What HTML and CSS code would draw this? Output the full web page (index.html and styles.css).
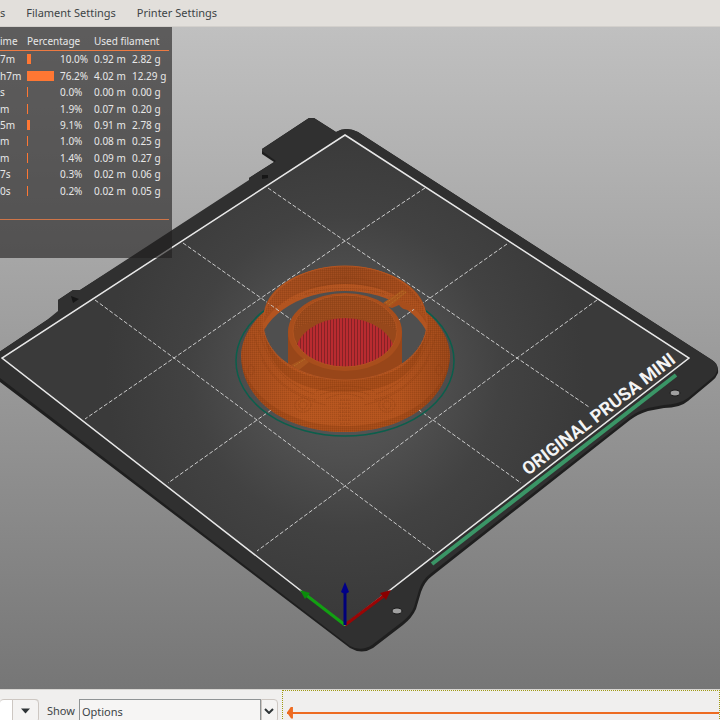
FILE: index.html
```html
<!DOCTYPE html>
<html lang="en">
<head>
    <meta charset="UTF-8">
    <meta name="viewport" content="width=device-width, initial-scale=1.0">
    <title>Preview</title>
    <link rel="stylesheet" href="styles.css">
</head>
<body>
    <!-- Settings tabs -->
    <nav class="tabs">
        <button type="button">s</button>
        <button type="button">Filament Settings</button>
        <button type="button">Printer Settings</button>
    </nav>

    <main class="viewport">
        <!-- 3D scene -->
        <svg class="scene" viewBox="0 27 720 662" preserveAspectRatio="xMidYMid slice">
            <defs>
                <radialGradient id="bed" gradientUnits="userSpaceOnUse" cx="345" cy="372" r="240">
                    <stop offset="0" stop-color="#5c5c5c"/>
                    <stop offset="0.35" stop-color="#505050"/>
                    <stop offset="0.65" stop-color="#424242"/>
                    <stop offset="1" stop-color="#3a3a3a"/>
                </radialGradient>
                <linearGradient id="cone" x1="0" x2="1" y1="0" y2="0">
                    <stop offset="0" stop-color="#a24a1b"/>
                    <stop offset="0.3" stop-color="#b5551e"/>
                    <stop offset="0.75" stop-color="#b2531d"/>
                    <stop offset="1" stop-color="#964417"/>
                </linearGradient>
                <linearGradient id="wall" x1="0" x2="1" y1="0" y2="0">
                    <stop offset="0" stop-color="#a64d1d"/>
                    <stop offset="0.5" stop-color="#94451a"/>
                    <stop offset="1" stop-color="#a54b1b"/>
                </linearGradient>
                <pattern id="infill" width="3" height="6" patternUnits="userSpaceOnUse">
                    <rect width="3" height="6" fill="#b92b30"/>
                    <rect width="1" height="6" fill="#862225"/>
                </pattern>
                <pattern id="layers" width="2" height="2" patternUnits="userSpaceOnUse">
                    <rect width="1" height="1" fill="#7c3710" fill-opacity="0.25"/>
                    <rect x="1" y="1" width="1" height="1" fill="#d06a30" fill-opacity="0.2"/>
                </pattern>
                <clipPath id="rim"><ellipse cx="345" cy="323" rx="82" ry="57"/></clipPath>
                <clipPath id="hub"><ellipse cx="345" cy="331" rx="52" ry="36"/></clipPath>
            </defs>

            <!-- Steel sheet, side then top -->
            <path class="plate-side" d="M-8 376 L-8 357 L47 320 L58 313 L58 300 L73 290 L80 290 L249 183 L249 178 L274 162 L262 154 L262 149 L309 118 L314 118 L336 132 Q346 126 358 132 L712 360 Q719 365 718 373 Q716 378 712 381 L688 401 Q680 408 664 408 L648 411 Q638 414 630 420 L432 576 Q425 581 421 592 L416 609 Q412 618 403 625 L373 648 Q362 655 350 648 Z"/>
            <path class="plate-top" d="M-8 372 L-8 357 L47 320 L58 311 L58 300 L73 290 L80 290 L249 180 L249 178 L276 161 L262 151 L262 149 L309 118 L314 118 L336 132 Q346 126 358 132 L712 360 Q719 364 717 371 Q716 375 712 378 L688 398 Q680 404 664 405 L648 408 Q638 411 630 417 L430 574 Q422 580 419 590 L414 607 Q411 615 402 622 L372 645 Q361 652 350 646 Z"/>
            <path class="notch" d="M262 175 L268 175 L268 178 L262 179 Z M71 296 L79 299 L73 303 Z"/>
            <path fill="url(#bed)" d="M345 135 L689 358 L345 625 L2 358 Z"/>
            <ellipse class="hole" cx="675" cy="393" rx="5" ry="3"/>
            <ellipse class="hole" cx="397" cy="611" rx="5" ry="3"/>

            <!-- Grid and border of the print area -->
            <g class="grid">
                <path d="M268 188 L345 241 L430 298 L517 358 L589 407"/>
                <path d="M183 243 L261 298 L345 358 L433 420 L521 483"/>
                <path d="M95 300 L174 358 L257 420 L345 486 L434 552"/>
                <path d="M425 188 L345 241 L261 298 L174 358 L85 419"/>
                <path d="M507 244 L430 298 L345 358 L257 420 L168 483"/>
                <path d="M597 300 L517 358 L433 420 L345 486 L257 551"/>
            </g>
            <path class="border" d="M345 135 L689 358 L345 625 L2 358 Z"/>
            <path class="stripe" d="M432 564 L676 375"/>
            <text class="brand" transform="translate(528 476) rotate(-37.5)">ORIGINAL PRUSA MINI</text>

            <!-- Skirt -->
            <ellipse class="skirt" cx="345" cy="361" rx="109" ry="75"/>

            <!-- Printed part -->
            <path fill="url(#cone)" d="M264 312 C268 286 303 266 345 266 C387 266 422 286 426 312 C442 325 450 342 450 356 C448 402 402 432 345 432 C288 432 242 402 241 356 C241 342 249 325 264 312 Z"/>
            <path class="shade" d="M263 323 Q270 380 345 380 Q420 380 427 323 Q424 392 345 392 Q266 392 263 323 Z"/>
            <path class="shade" d="M241 356 C242 402 288 432 345 432 C402 432 448 402 450 356 C444 398 400 426 345 426 C290 426 246 398 241 356 Z"/>
            <g clip-path="url(#rim)">
                <rect x="260" y="264" width="170" height="120" fill="url(#wall)"/>
                <ellipse cx="345" cy="347" rx="88" ry="63" fill="#b25420"/>
                <ellipse cx="345" cy="353" rx="87" ry="62" fill="#4f4f4f"/>
                <path class="grid-under" d="M261 298 L345 358 M430 298 L345 358"/>
                <path d="M288 331 L402 331 L402 364 L402 384 L288 384 Z" fill="#984619"/>
                <path d="M385 306 L404 289 L412 297 L428 312 L427 321 L419 312 L413 309 Q404 312 399 305 L392 308 Z" fill="#a84e1c"/>
            </g>
            <ellipse cx="345" cy="332" rx="57" ry="39" fill="#a84e1c"/>
            <g clip-path="url(#hub)">
                <rect x="290" y="290" width="110" height="80" fill="#97481b"/>
                <ellipse cx="345" cy="355" rx="50" ry="37" fill="url(#infill)"/>
            </g>
            <ellipse cx="345" cy="331" rx="52" ry="36" fill="none" stroke="#b05420"/>
            <path d="M383 303 L402 290 L407 292 L390 307 Z" fill="#aa561d"/>
            <path class="spoke" d="M386 303 L404 290 M389 305 L406 292"/>
            <path d="M291 365 L304 358 L309 362 L299 370 Z" fill="#a8541e"/>
            <path class="spoke" d="M294 366 L305 359"/>

            <!-- Layer lines -->
            <path fill="url(#layers)" d="M241 356 C241 342 249 325 264 312 C260 355 300 380 345 380 C390 380 430 355 426 312 C442 325 450 342 450 356 C448 402 402 432 345 432 C288 432 242 402 241 356 Z"/>
            <path fill="url(#layers)" d="M264 318 C268 286 303 266 345 266 C387 266 422 286 426 318 C412 300 380 291 345 291 C310 291 280 300 264 318 Z"/>
            <path fill="url(#layers)" d="M294 331 C296 308 318 295 345 295 C372 295 395 308 397 331 C380 314 310 314 294 331 Z"/>
            <ellipse cx="345" cy="323" rx="82" ry="57" fill="none" stroke="#b45521"/>
            <g class="moire">
                <path d="M259 330 Q272 380 314 394 M254 334 Q266 386 316 400 M262 360 Q280 394 326 405 M431 330 Q418 380 376 394 M436 334 Q424 386 374 400 M428 360 Q410 394 364 405"/>
                <path d="M316 391 Q345 381 374 391 M320 395 Q345 385 370 395 M326 399 Q345 389 364 399"/>
                <ellipse cx="303" cy="405" rx="4" ry="4"/>
                <ellipse cx="303" cy="405" rx="8" ry="7"/>
                <ellipse cx="387" cy="405" rx="4" ry="4"/>
                <ellipse cx="387" cy="405" rx="8" ry="7"/>
                <ellipse cx="251" cy="370" rx="3" ry="5"/>
                <ellipse cx="439" cy="370" rx="3" ry="5"/>
                <path d="M340 400 H350 M339 404 H351 M339 408 H351 M339 412 H351 M339 416 H351 M339 420 H351 M340 424 H350"/>
                <path d="M315 282 Q345 274 375 282 M310 288 Q345 279 380 288 M305 294 Q345 283 385 294"/>
            </g>

            <!-- Axes -->
            <path d="M345 625 L306 595" stroke="#12a012" stroke-width="3"/>
            <path d="M300 590 L310 593 L305 599 Z" fill="#0b8c0b"/>
            <path d="M345 625 L385 595" stroke="#9a0505" stroke-width="3"/>
            <path d="M391 590 L380 593 L386 600 Z" fill="#8a0000"/>
            <path d="M345 625 V592" stroke="#00007a" stroke-width="3"/>
            <path d="M345 582 L349 592 Q345 595 341 592 Z" fill="#00008a"/>
        </svg>

        <!-- Feature type legend -->
        <section class="legend">
            <table>
                <colgroup>
                    <col class="time">
                    <col class="share">
                    <col class="percent">
                    <col class="length">
                    <col>
                </colgroup>
                <thead>
                    <tr>
                        <th>ime</th>
                        <th colspan="2">Percentage</th>
                        <th colspan="2">Used filament</th>
                    </tr>
                </thead>
                <tbody>
                    <tr><td>7m</td><td><div class="bar" style="width: 4px"></div></td><td>10.0%</td><td>0.92 m</td><td>2.82 g</td></tr>
                    <tr><td>h7m</td><td><div class="bar" style="width: 27px"></div></td><td>76.2%</td><td>4.02 m</td><td>12.29 g</td></tr>
                    <tr><td>s</td><td><div class="bar" style="width: 1px"></div></td><td>0.0%</td><td>0.00 m</td><td>0.00 g</td></tr>
                    <tr><td>m</td><td><div class="bar" style="width: 1px"></div></td><td>1.9%</td><td>0.07 m</td><td>0.20 g</td></tr>
                    <tr><td>5m</td><td><div class="bar" style="width: 3px"></div></td><td>9.1%</td><td>0.91 m</td><td>2.78 g</td></tr>
                    <tr><td>m</td><td><div class="bar" style="width: 1px"></div></td><td>1.0%</td><td>0.08 m</td><td>0.25 g</td></tr>
                    <tr><td>m</td><td><div class="bar" style="width: 1px"></div></td><td>1.4%</td><td>0.09 m</td><td>0.27 g</td></tr>
                    <tr><td>7s</td><td><div class="bar" style="width: 1px"></div></td><td>0.3%</td><td>0.02 m</td><td>0.06 g</td></tr>
                    <tr><td>0s</td><td><div class="bar" style="width: 1px"></div></td><td>0.2%</td><td>0.02 m</td><td>0.05 g</td></tr>
                </tbody>
            </table>
            <hr>
        </section>
    </main>

    <!-- View controls -->
    <footer class="controls">
        <div class="combo view">
            <select aria-label="View"><option></option></select>
            <span class="arrow">
                <svg width="10" height="6" viewBox="0 0 10 6"><path d="M0 0.5 H9 L4.5 5.5 Z" fill="#2e3436"/></svg>
            </span>
        </div>
        <label for="show">Show</label>
        <div class="combo show">
            <select id="show"><option>Options</option></select>
            <span class="arrow">
                <svg width="10" height="6" viewBox="0 0 10 6"><path d="M1 1 L5 5 L9 1" fill="none" stroke="#2e3436" stroke-width="2"/></svg>
            </span>
        </div>
        <div class="moves">
            <input type="range" min="0" max="100" value="0" aria-label="Moves">
        </div>
    </footer>
</body>
</html>
```
FILE: styles.css
```css
* {
    box-sizing: border-box;
}

body {
    display: flex;
    flex-direction: column;
    height: 100vh;
    margin: 0;
    overflow: hidden;
    font-family: "Noto Sans", sans-serif;
    font-size: 11px;
    color: #3d4446;
    background: #f0efee;
}

/* Tabs on top */
.tabs {
    display: flex;
    gap: 21px;
    height: 27px;
    padding-bottom: 2px;
    flex: none;
    background: #e2dfdb;
    border-bottom: 1px solid #d3d0cc;
}

.tabs button {
    padding: 0;
    border: none;
    background: none;
    font: inherit;
    color: inherit;
    white-space: nowrap;
}

/* 3D view */
.viewport {
    position: relative;
    flex: 1;
    min-height: 0;
    background: linear-gradient(#c0c0c0, #767676);
}

.scene {
    display: block;
    width: 100%;
    height: 100%;
}

.plate-side {
    fill: #1f1f1f;
}

.plate-top {
    fill: #303030;
}

.notch {
    fill: #161616;
}

.hole {
    fill: #a0a0a0;
    stroke: #1c1c1c;
}

.grid path,
.grid-under {
    fill: none;
    stroke: #cccccc;
    stroke-width: 1;
    stroke-dasharray: 4 2;
}

.border {
    fill: none;
    stroke: #e8e8e8;
    stroke-width: 1.5;
}

.stripe {
    stroke: #3a9566;
    stroke-width: 4;
}

.brand {
    font-family: Roboto, sans-serif;
    font-size: 18px;
    font-weight: 700;
    fill: #f4f4f4;
}

.skirt {
    fill: none;
    stroke: #0b5f4c;
    stroke-width: 1.5;
}

.shade {
    fill: #84390f;
    fill-opacity: 0.35;
}

.spoke {
    fill: none;
    stroke: #b87528;
    stroke-dasharray: 1 1;
}

.moire {
    fill: none;
    stroke: #7e3912;
    stroke-opacity: 0.3;
    stroke-dasharray: 2 1;
}

/* Legend over the 3D view */
.legend {
    position: absolute;
    top: 0;
    left: 0;
    width: 172px;
    height: 231px;
    padding: 4px 3px 0 0;
    font-size: 10px;
    color: #e8e8e8;
    background: rgba(32, 30, 30, 0.62);
}

.legend table {
    width: 169px;
    height: 168px;
    border-collapse: separate;
    border-spacing: 0;
    table-layout: fixed;
}

.legend th,
.legend td {
    padding: 0;
    font-weight: 400;
    line-height: 16px;
    text-align: left;
    white-space: nowrap;
}

.legend th {
    height: 20px;
    border-bottom: 1px solid #ed7a42;
}

.legend .time {
    width: 27px;
}

.legend .share {
    width: 33px;
}

.legend .percent {
    width: 34px;
}

.legend .length {
    width: 38px;
}

.legend hr {
    height: 1px;
    margin: 20px 0 0;
    border: none;
    background: #cf7548;
}

.bar {
    height: 10px;
    background: #ff7733;
}

/* Bottom controls */
.controls {
    display: flex;
    flex: none;
    height: 31px;
    overflow: hidden;
    border-top: 1px solid #d8d6d3;
}

.controls label {
    margin: 9px 4px 0 8px;
    line-height: 24px;
}

.combo {
    display: grid;
    flex: none;
    height: 24px;
    margin-top: 9px;
}

.combo select,
.combo .arrow {
    grid-area: 1 / 1;
}

.combo select {
    padding: 0 2px;
    border: 1px solid #8f9394;
    border-radius: 0;
    appearance: none;
    font: inherit;
    color: inherit;
    background: #f6f5f4;
}

.combo .arrow {
    display: flex;
    justify-content: center;
    align-items: center;
    justify-self: end;
    border: 1px solid #cdc7c2;
    border-radius: 0 4px 4px 0;
    background: #f4f3f2;
    pointer-events: none;
}

.view {
    width: 39px;
}

.view select {
    border: none;
    border-top: 1px solid #cdc7c2;
    border-radius: 4px;
    background: #fff;
}

.view .arrow {
    width: 27px;
}

.show {
    width: 199px;
}

.show select {
    margin-right: 17px;
}

.show .arrow {
    width: 17px;
}

/* Moves slider */
.moves {
    flex: 1;
    height: 45px;
    margin-left: 4px;
    border: 1px dotted #a09a10;
}

.moves input {
    display: block;
    width: 100%;
    height: 43px;
    margin: 0;
    padding-left: 4px;
    appearance: none;
    background: none;
}

.moves input::-webkit-slider-runnable-track {
    height: 2px;
    background: #ed6b21;
}

.moves input::-webkit-slider-thumb {
    width: 6px;
    height: 12px;
    margin-top: -5px;
    appearance: none;
    background: #ed6b21;
    clip-path: polygon(0 50%, 70% 0, 100% 0, 100% 100%, 70% 100%);
}
```
